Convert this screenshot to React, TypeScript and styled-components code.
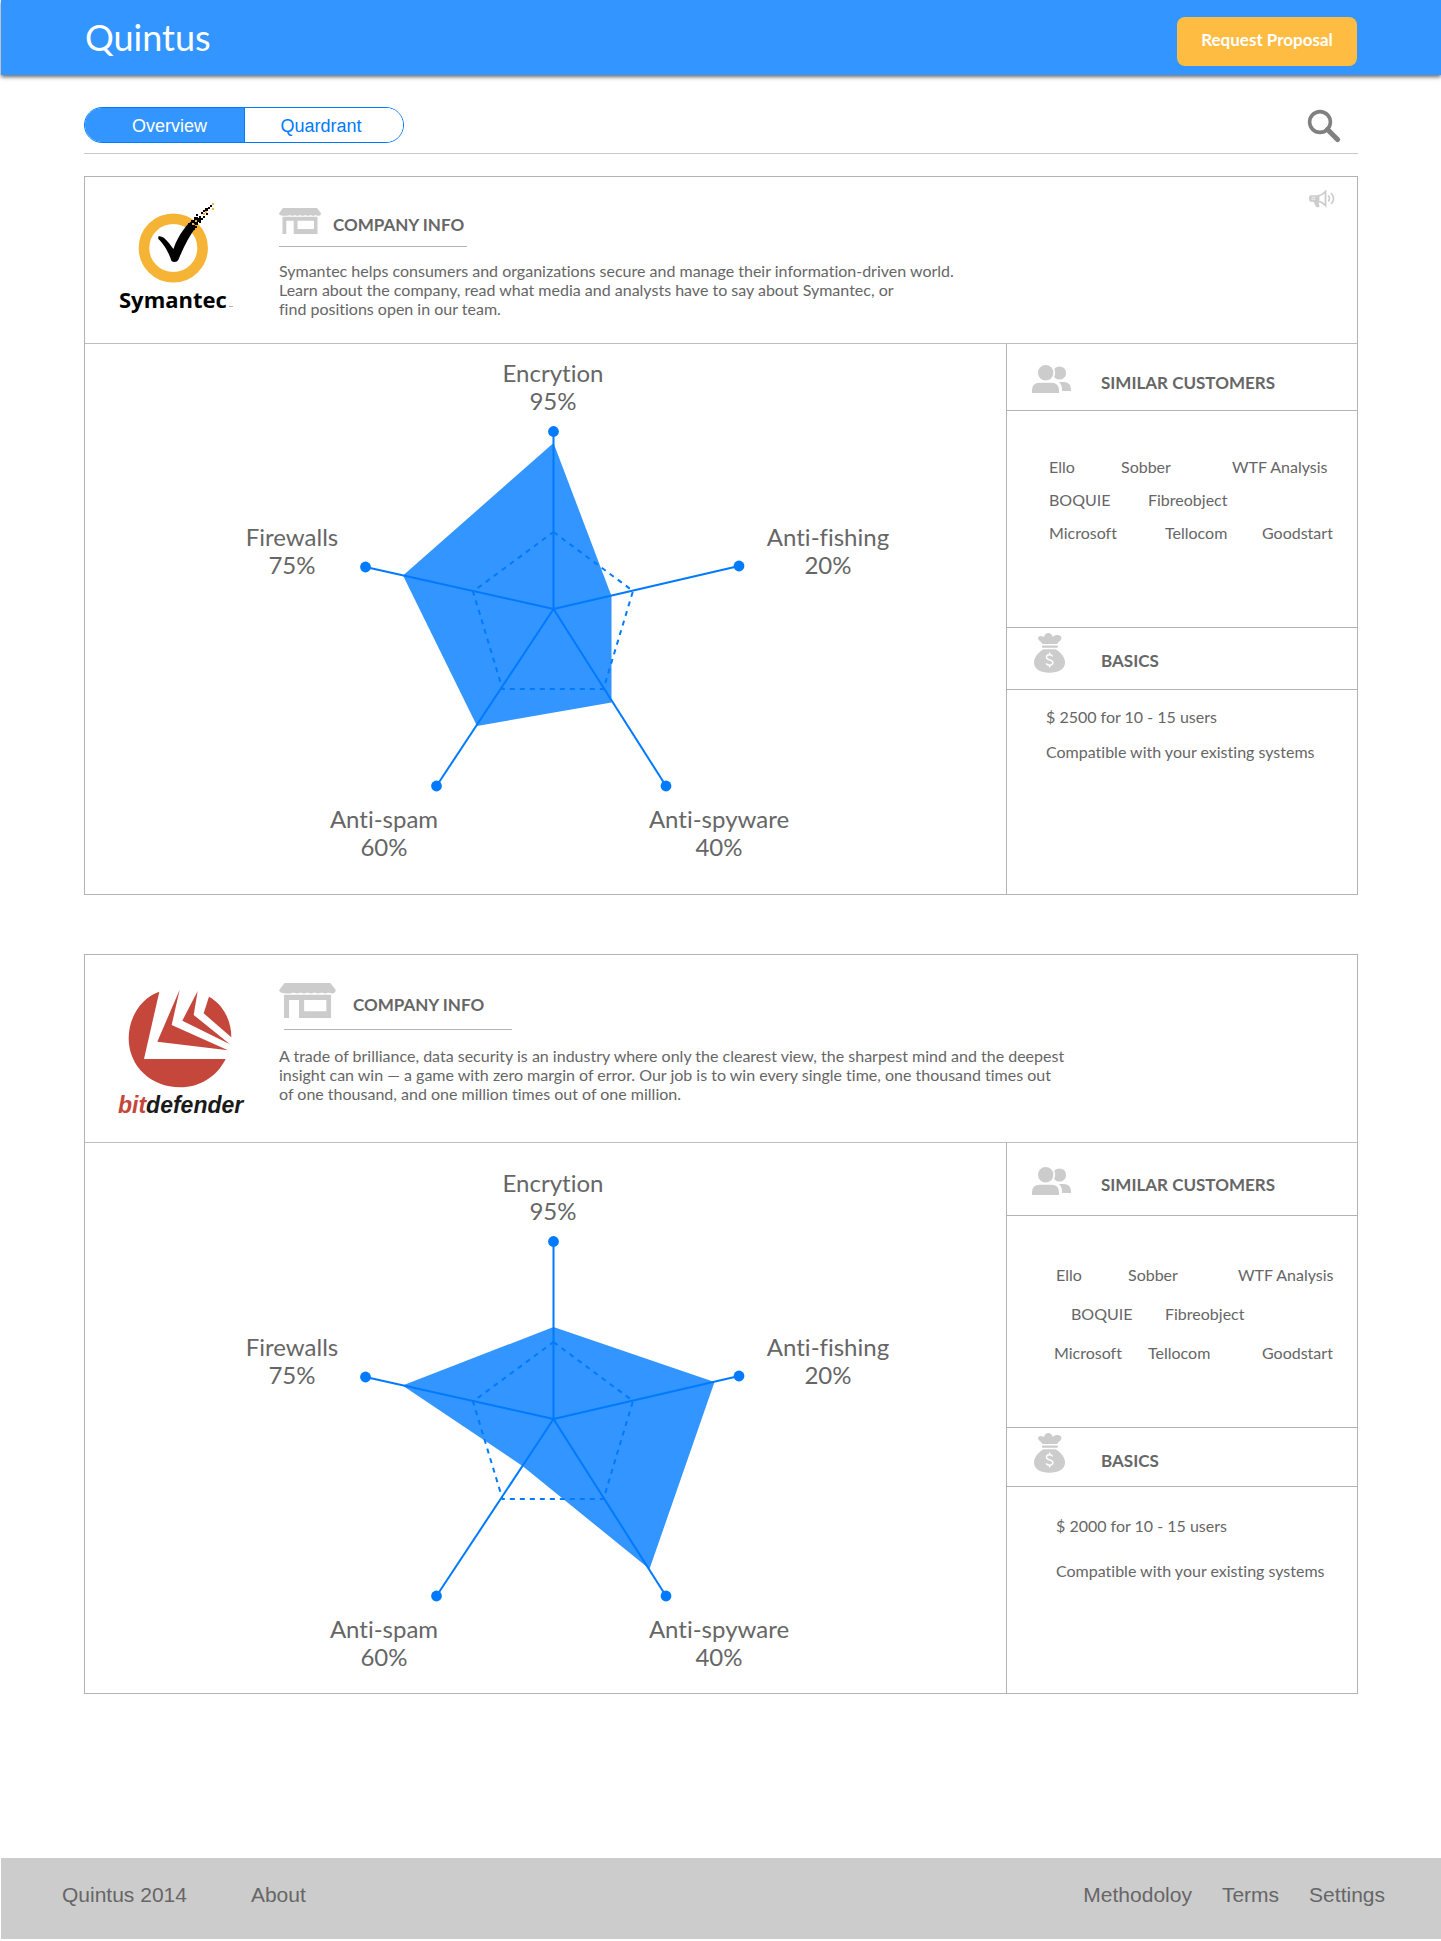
import React from "react";
import styled, { createGlobalStyle } from "styled-components";

const color = {
  primary: "#3395ff",
  accent: "#007aff",
  amber: "#ffbc43",
  text: "#666666",
  line: "#b3b3b3",
  icon: "#cccccc",
};

const humanist = `Lato, "Open Sans", sans-serif`;
const grotesque = `"Liberation Sans", Arial, sans-serif`;

const GlobalStyle = createGlobalStyle`
  *, *::before, *::after { box-sizing: border-box; }
  body {
    margin: 0;
    background: #fff;
    color: ${color.text};
    font-family: ${humanist};
    font-variant-ligatures: no-common-ligatures;
  }
  h1, h2, h3, p, ul, figure { margin: 0; padding: 0; }
  ul { list-style: none; }
  button { font: inherit; border: 0; cursor: pointer; }
  a { color: inherit; text-decoration: none; }
  svg { display: block; flex: none; }
`;

const Page = styled.div`
  display: flex;
  flex-direction: column;
  min-height: 100vh;
  padding: 0 0 2px 1px;
`;

const Header = styled.header`
  display: flex;
  align-items: center;
  justify-content: space-between;
  height: 75px;
  padding: 0 84px;
  background: ${color.primary};
  box-shadow: 0 2px 4px rgba(0, 0, 0, 0.6);
`;

const Brand = styled.h1`
  padding-bottom: 2px;
  color: #fff;
  font-size: 36px;
  font-weight: 400;
  line-height: 40px;
`;

const ProposalButton = styled.button`
  width: 180px;
  height: 49px;
  margin-top: 8px;
  padding: 0 0 4px;
  border-radius: 8px;
  background: ${color.amber};
  color: #fff;
  font-size: 17px;
  font-weight: 700;
`;

const Main = styled.main`
  flex: 1;
  padding: 32px 83px 0;
`;

const Toolbar = styled.div`
  display: flex;
  align-items: flex-start;
  justify-content: space-between;
  height: 47px;
  border-bottom: 1px solid #c8c8c8;
`;

const Segments = styled.div`
  display: flex;
  width: 320px;
  height: 36px;
  border: 1px solid ${color.accent};
  border-radius: 18px;
  overflow: hidden;
`;

const Segment = styled.button<{ $active?: boolean }>`
  flex: none;
  width: 50%;
  padding: 2px 0 0 10px;
  background: ${(p) => (p.$active ? color.primary : "#fff")};
  color: ${(p) => (p.$active ? "#fff" : color.accent)};
  font-family: ${grotesque};
  font-size: 18px;
  & + & {
    padding: 2px 6px 0 0;
    border-left: 1px solid ${color.accent};
  }
`;

const IconButton = styled.button`
  padding: 0;
  margin: 2px 17px 0 0;
  background: none;
`;

const Card = styled.article<{ $gap: number }>`
  margin-top: ${(p) => p.$gap}px;
  border: 1px solid ${color.line};
`;

const CardHead = styled.header<{ $height: number }>`
  display: flex;
  min-height: ${(p) => p.$height}px;
  border-bottom: 1px solid #bdbdbd;
`;

const LogoCell = styled.div`
  flex: none;
  width: 194px;
  padding: 23px 0 0 30px;
`;

const Info = styled.section<{ $roomy?: boolean }>`
  flex: 1;
  padding-top: ${(p) => (p.$roomy ? 28 : 30)}px;
`;

const InfoTitle = styled.div<{ $roomy?: boolean }>`
  display: flex;
  align-items: center;
  gap: ${(p) => (p.$roomy ? 17 : 12)}px;
`;

const Heading = styled.h2`
  padding-top: 8px;
  font-size: 17px;
  font-weight: 700;
  line-height: 20px;
  text-transform: uppercase;
`;

const Rule = styled.div<{ $roomy?: boolean }>`
  width: ${(p) => (p.$roomy ? 228 : 188)}px;
  margin: ${(p) => (p.$roomy ? "11px 0 16px 5px" : "11px 0 14px")};
  border-top: 1px solid ${color.line};
`;

const Blurb = styled.p`
  font-size: 16px;
  line-height: 19px;
`;

const Announce = styled.div`
  padding: 13px 22px 0 0;
`;

const CardBody = styled.div`
  display: grid;
  grid-template-columns: minmax(0, 1fr) 351px;
  min-height: 550px;
`;

const Chart = styled.figure<{ $top: number }>`
  display: flex;
  justify-content: center;
  padding-top: ${(p) => p.$top}px;
`;

const AxisLabel = styled.text`
  fill: ${color.text};
  font-family: ${humanist};
  font-size: 24px;
  text-anchor: middle;
`;

const Side = styled.aside`
  display: flex;
  flex-direction: column;
  border-left: 1px solid ${color.line};
`;

const SideHead = styled.div<{ $height: number }>`
  display: grid;
  grid-template-columns: 69px 1fr;
  align-items: center;
  height: ${(p) => p.$height}px;
  padding: 4px 0 0 25px;
  border-bottom: 1px solid ${color.line};
`;

const BasicsHead = styled(SideHead)`
  grid-template-columns: 67px 1fr;
  align-items: start;
  padding: 5px 0 0 27px;
  ${Heading} {
    padding-top: 18px;
  }
`;

const Customers = styled.ul<{ $height: number; $roomy?: boolean }>`
  display: flex;
  flex-direction: column;
  gap: ${(p) => (p.$roomy ? 19 : 13)}px;
  height: ${(p) => p.$height}px;
  padding: ${(p) => (p.$roomy ? 49 : 46)}px 0 0 42px;
  border-bottom: 1px solid ${color.line};
`;

const CustomerRow = styled.li<{ $columns: string }>`
  display: grid;
  grid-template-columns: ${(p) => p.$columns};
  font-size: 16px;
  line-height: 20px;
  white-space: nowrap;
`;

const Facts = styled.ul<{ $roomy?: boolean }>`
  display: flex;
  flex-direction: column;
  gap: ${(p) => (p.$roomy ? 25 : 15)}px;
  padding: ${(p) => (p.$roomy ? "29px 0 0 49px" : "17px 0 0 39px")};
  font-size: 16px;
  line-height: 20px;
  white-space: nowrap;
`;

const Footer = styled.footer`
  display: flex;
  justify-content: space-between;
  height: 81px;
  padding: 25px 56px 0 61px;
  background: ${color.icon};
  font-family: ${grotesque};
  font-size: 21px;
  line-height: 24px;
`;

const FooterLinks = styled.nav<{ $gap: number }>`
  display: flex;
  gap: ${(p) => p.$gap}px;
`;

const SearchIcon = () => (
  <svg width="34" height="34" viewBox="0 0 34 34" fill="none" stroke="#808080" aria-hidden="true">
    <circle cx="13" cy="13" r="10.4" strokeWidth="3.6" />
    <path d="M20.5 20.5 30.5 30.5" strokeWidth="5.2" strokeLinecap="round" />
  </svg>
);

const StoreIcon = ({ width }: { width: number }) => (
  <svg width={width} height={Math.round((width * 26) / 42)} viewBox="0 0 42 26" fill={color.icon} aria-hidden="true">
    <path d="M4 0h34l4 5.200c0 1.600-1.200 2.600-2.600 2.600-1.200 0-2-.5-2.700-.5-.9 0-1.500.5-2.600.5s-1.700-.5-2.600-.5-1.500.5-2.600.5-1.700-.5-2.600-.5-1.500.5-2.600.5-1.700-.5-2.600-.5-1.500.5-2.600.5-1.700-.5-2.600-.5-1.500.5-2.600.5-1.700-.5-2.600-.5-1.700.5-2.700.5C1.200 7.800 0 6.800 0 5.200Z" />
    <path fillRule="evenodd" d="M3.500 8.800h35V26H14.700V12.700H7.300V26H3.500ZM18.500 12.700v8.300h16.500v-8.300Z" />
  </svg>
);

const PeopleIcon = () => (
  <svg width="39" height="28" viewBox="0 0 39 28" fill={color.icon} aria-hidden="true">
    <circle cx="27.500" cy="8" r="6.600" />
    <circle cx="13.700" cy="7.800" r="7.700" stroke="#fff" strokeWidth="3.600" paintOrder="stroke" />
    <path d="M27 17h4.500q7.500 0 7.500 7.500V26h-9v-1.500q0-4.500-3-7.500Z" />
    <path d="M0 28v-2.500Q0 17.800 7.500 17.800h12q7.500 0 7.500 7.700V28Z" />
  </svg>
);

const MoneyBagIcon = () => (
  <svg width="31" height="40" viewBox="0 0 31 40" fill={color.icon} aria-hidden="true">
    <path d="M8.500 11C7.500 8.500 4.200 7.500 4 5.200 4 3 7 2.300 10 3.900 11-1.200 17.500-1.300 18.800 4c2.700-3 8.800-2.300 8.600 1C27.200 8 24.500 8.500 23 11Z" />
    <rect x="8" y="12.600" width="16" height="2.200" rx="1" />
    <path d="M9.500 16.300h12.200C27 19.500 31 24.500 31 29.500c0 6.500-6 10.200-15.500 10.200S0 36 0 29.500c0-5 4-10 9.500-13.200Z" />
    <path
      d="M18.700 23.400c-.7-1.100-1.800-1.600-3.200-1.600-1.900 0-3.100.9-3.100 2.400 0 3.400 6.500 1.800 6.500 5.300 0 1.700-1.400 2.700-3.300 2.700-1.600 0-2.800-.6-3.500-1.700M15.600 19.400v2.400M15.600 32.200v2.400"
      fill="none"
      stroke="#fff"
      strokeWidth="1.400"
    />
  </svg>
);

const MegaphoneIcon = () => (
  <svg width="26" height="18" viewBox="0 0 26 18" role="img" aria-label="Announcements">
    <path d="M2 5.200h7.500v6.300l1 5.200q-2.500 1.200-3.600-.3L4.700 11.800H2Q0 11.800 0 8.500T2 5.200Z" fill={color.icon} />
    <path d="M2.500 7.300h4M2.500 9.300h4" stroke="#fff" strokeWidth=".7" />
    <path d="M9.500 5.800q4-.8 7-4.300v14q-3-3.500-7-4.200Z" fill="#fff" stroke={color.icon} strokeWidth="1.800" />
    <path d="M19.300 5.500q2.400 3 0 6M22 3q5 5.500 0 11" fill="none" stroke={color.icon} strokeWidth="1.600" />
  </svg>
);

/* Loose pixels trailing off the end of the check mark: x, y, size, amber */
const sparks: [number, number, number, boolean][] = [
  [73, 23, 4, false], [76, 20, 4, false], [79, 17, 4, false], [82, 18, 4, false],
  [80, 22, 3, false], [84, 21, 2, false], [86, 18, 2, false], [77, 27, 3, false],
  [80, 26, 2, false], [81, 14, 2, false], [84, 16, 2, false], [88, 16, 2, false],
  [86, 12, 2, false], [88, 10, 2, false], [90, 8, 3, false], [91, 13, 2, false],
  [93, 7, 2, false], [88, 13, 2, true], [95, 5, 2, false], [90, 11, 2, true],
  [97, 3, 2, true], [97, 8, 2, true], [77, 23, 2, true], [80, 20, 2, true],
];

const SymantecLogo = () => (
  <svg width="120" height="118" viewBox="0 0 120 118" role="img" aria-label="Symantec">
    <circle cx="58.300" cy="48" r="29.300" fill="none" stroke="#f6b436" strokeWidth="10.600" />
    <path d="M43.300 36.500C46 35.500 50 38 53 42c2 2.500 4 5 5.500 7C61 41 66 32 73 24l4-3 4 6C75 35 69 46 63.500 59.500 62.500 62.300 58.500 62.700 56.500 61 54 53 49 44 43.300 39Z" />
    {sparks.map(([x, y, size, amber], i) => (
      <rect key={i} x={x} y={y} width={size} height={size} fill={amber ? "#f6b436" : "#000"} />
    ))}
    <text x="4" y="108" fontFamily="'Open Sans', 'Noto Sans', sans-serif" fontWeight="700" fontSize="22">
      Symantec
    </text>
    <rect x="114" y="106" width="4" height="1" fill="#b3b3b3" />
  </svg>
);

const BitdefenderLogo = () => (
  <svg width="140" height="144" viewBox="0 0 140 144" role="img" aria-label="bitdefender">
    <g transform="translate(-45 -38) scale(.33333)" fill="#c5463b">
      <path d="M268 155C214 172 176 232 176 295c0 85 68 147 154 147 60 0 110-32 137-85H222Z" />
      <path d="M329 149 262 305l212 26-169-76Z" />
      <path d="M383 153l-46 89 143 71-109-88Z" />
      <path d="M417 170c40 22 67 68 67 122l-83-72Z" />
    </g>
    <text x="3" y="135" fontFamily="'Liberation Sans', Arial, sans-serif" fontSize="23" fontWeight="700" fontStyle="italic">
      <tspan fill="#c5463b">bit</tspan>
      <tspan fill="#1a1a1a">defender</tspan>
    </text>
  </svg>
);

type Point = [number, number];

const hub: Point = [468.5, 265];
const axes: { name: string; value: string; tip: Point; label: Point }[] = [
  { name: "Encrytion", value: "95%", tip: [468.5, 87.5], label: [468, 37] },
  { name: "Anti-fishing", value: "20%", tip: [654, 222], label: [743, 201] },
  { name: "Anti-spyware", value: "40%", tip: [581, 442], label: [634, 483] },
  { name: "Anti-spam", value: "60%", tip: [351.5, 442], label: [299, 483] },
  { name: "Firewalls", value: "75%", tip: [280.5, 223], label: [207, 201] },
];
const average: Point[] = [[468.5, 188], [548, 247], [518.5, 345], [417.5, 345], [388, 247.5]];

const join = (points: Point[]) => points.map((p) => p.join(",")).join(" ");

const Radar = ({ scores, top }: { scores: Point[]; top: number }) => (
  <Chart $top={top}>
    <svg width="700" height="520" viewBox="111 0 700 520" role="img" aria-label="Security ratings">
      <polygon points={join(scores)} fill={color.primary} />
      <polygon points={join(average)} fill="none" stroke={color.accent} strokeWidth="2" strokeDasharray="5 5" />
      {axes.map(({ name, value, tip, label }) => (
        <g key={name}>
          <line x1={hub[0]} y1={hub[1]} x2={tip[0]} y2={tip[1]} stroke={color.accent} strokeWidth="2" />
          <circle cx={tip[0]} cy={tip[1]} r="5.400" fill={color.accent} />
          <AxisLabel x={label[0]} y={label[1] + 1}>{name}</AxisLabel>
          <AxisLabel x={label[0]} y={label[1] + 29}>{value}</AxisLabel>
        </g>
      ))}
    </svg>
  </Chart>
);

interface Vendor {
  id: string;
  roomy: boolean;
  logo: React.ReactNode;
  blurb: string[];
  scores: Point[];
  customers: { columns: string; names: string[] }[];
  facts: string[];
  size: { gap: number; head: number; chartTop: number; customersHead: number; customers: number; basicsHead: number };
}

const vendors: Vendor[] = [
  {
    id: "symantec",
    roomy: false,
    logo: <SymantecLogo />,
    blurb: [
      "Symantec helps consumers and organizations secure and manage their information-driven world.",
      "Learn about the company, read what media and analysts have to say about Symantec, or",
      "find positions open in our team.",
    ],
    scores: [[468.5, 99], [526.5, 252], [526.5, 358.5], [392, 382], [318, 231.5]],
    customers: [
      { columns: "72px 111px auto", names: ["Ello", "Sobber", "WTF Analysis"] },
      { columns: "99px auto", names: ["BOQUIE", "Fibreobject"] },
      { columns: "116px 97px auto", names: ["Microsoft", "Tellocom", "Goodstart"] },
    ],
    facts: ["$ 2500 for 10 - 15 users", "Compatible with your existing systems"],
    size: { gap: 22, head: 167, chartTop: 0, customersHead: 67, customers: 217, basicsHead: 62 },
  },
  {
    id: "bitdefender",
    roomy: true,
    logo: <BitdefenderLogo />,
    blurb: [
      "A trade of brilliance, data security is an industry where only the clearest view, the sharpest mind and the deepest",
      "insight can win — a game with zero margin of error. Our job is to win every single time, one thousand times out",
      "of one thousand, and one million times out of one million.",
    ],
    scores: [[468.5, 173], [629.5, 228], [564.5, 415], [437.5, 312], [317.5, 231.5]],
    customers: [
      { columns: "7px 72px 110px auto", names: ["", "Ello", "Sobber", "WTF Analysis"] },
      { columns: "22px 94px auto", names: ["", "BOQUIE", "Fibreobject"] },
      { columns: "5px 94px 114px auto", names: ["", "Microsoft", "Tellocom", "Goodstart"] },
    ],
    facts: ["$ 2000 for 10 - 15 users", "Compatible with your existing systems"],
    size: { gap: 59, head: 188, chartTop: 11, customersHead: 73, customers: 212, basicsHead: 59 },
  },
];

const VendorCard = ({ vendor }: { vendor: Vendor }) => {
  const { roomy, size } = vendor;
  return (
    <Card $gap={size.gap}>
      <CardHead $height={size.head}>
        <LogoCell>{vendor.logo}</LogoCell>
        <Info $roomy={roomy}>
          <InfoTitle $roomy={roomy}>
            <StoreIcon width={roomy ? 57 : 42} />
            <Heading>Company info</Heading>
          </InfoTitle>
          <Rule $roomy={roomy} />
          <Blurb>
            {vendor.blurb.map((line) => (
              <React.Fragment key={line}>
                {line}
                <br />
              </React.Fragment>
            ))}
          </Blurb>
        </Info>
        {!roomy && (
          <Announce>
            <MegaphoneIcon />
          </Announce>
        )}
      </CardHead>
      <CardBody>
        <Radar scores={vendor.scores} top={size.chartTop} />
        <Side>
          <SideHead $height={size.customersHead}>
            <PeopleIcon />
            <Heading>Similar customers</Heading>
          </SideHead>
          <Customers $height={size.customers} $roomy={roomy}>
            {vendor.customers.map((row) => (
              <CustomerRow key={row.columns} $columns={row.columns}>
                {row.names.map((name) => (
                  <span key={name}>{name}</span>
                ))}
              </CustomerRow>
            ))}
          </Customers>
          <BasicsHead $height={size.basicsHead}>
            <MoneyBagIcon />
            <Heading>Basics</Heading>
          </BasicsHead>
          <Facts $roomy={roomy}>
            {vendor.facts.map((fact) => (
              <li key={fact}>{fact}</li>
            ))}
          </Facts>
        </Side>
      </CardBody>
    </Card>
  );
};

export default function App() {
  return (
    <>
      <GlobalStyle />
      <Page>
        <Header>
          <Brand>Quintus</Brand>
          <ProposalButton type="button">Request Proposal</ProposalButton>
        </Header>
        <Main>
          <Toolbar>
            <Segments>
              <Segment type="button" $active aria-pressed="true">Overview</Segment>
              <Segment type="button" aria-pressed="false">Quardrant</Segment>
            </Segments>
            <IconButton type="button" aria-label="Search">
              <SearchIcon />
            </IconButton>
          </Toolbar>
          {vendors.map((vendor) => (
            <VendorCard key={vendor.id} vendor={vendor} />
          ))}
        </Main>
        <Footer>
          <FooterLinks $gap={64}>
            <span>Quintus 2014</span>
            <a href="#about">About</a>
          </FooterLinks>
          <FooterLinks $gap={30}>
            <a href="#methodology">Methodoloy</a>
            <a href="#terms">Terms</a>
            <a href="#settings">Settings</a>
          </FooterLinks>
        </Footer>
      </Page>
    </>
  );
}
